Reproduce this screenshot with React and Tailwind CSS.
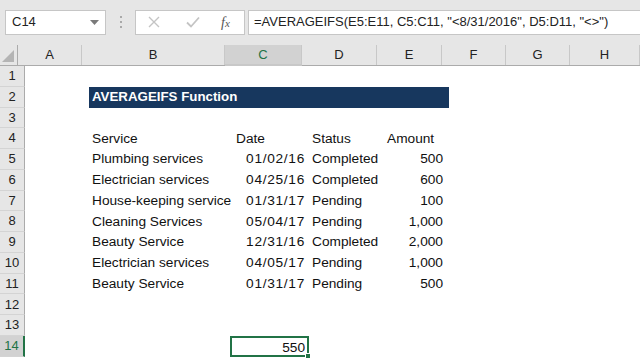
import React from "react";

const cols = [
  { key: "A", w: "w-[64px]" },
  { key: "B", w: "w-[143px]" },
  { key: "C", w: "w-[77px]" },
  { key: "D", w: "w-[75px]" },
  { key: "E", w: "w-[65px]" },
  { key: "F", w: "w-[64px]" },
  { key: "G", w: "w-[64px]" },
  { key: "H", w: "w-[70px]" },
];

const data = [
  ["Plumbing services", "01/02/16", "Completed", "500"],
  ["Electrician services", "04/25/16", "Completed", "600"],
  ["House-keeping service", "01/31/17", "Pending", "100"],
  ["Cleaning Services", "05/04/17", "Pending", "1,000"],
  ["Beauty Service", "12/31/16", "Completed", "2,000"],
  ["Electrician services", "04/05/17", "Pending", "1,000"],
  ["Beauty Service", "01/31/17", "Pending", "500"],
];

const cellFont = "font-['Liberation_Sans',Arial,sans-serif] text-[13.7px] text-[#111]";

const FormulaBar = () => (
  <div className="h-[45px] bg-[#e6e6e6] flex items-center pb-[1px]">
    <div className="ml-[5px] w-[101px] h-[25px] bg-white border border-[#c6c6c6] flex items-center justify-between px-[6px]">
      <span className="font-['Liberation_Sans',Arial,sans-serif] text-[13px] text-[#222]">C14</span>
      <svg width="9" height="5" viewBox="0 0 9 5">
        <path d="M0 0 L9 0 L4.5 5 Z" fill="#7a7a7a" />
      </svg>
    </div>
    <div className="ml-[14px] w-[3px] flex flex-col gap-[3px]">
      <div className="w-[2px] h-[2px] bg-[#a9a9a9]" />
      <div className="w-[2px] h-[2px] bg-[#a9a9a9]" />
      <div className="w-[2px] h-[2px] bg-[#a9a9a9]" />
    </div>
    <div className="ml-[12px] w-[110px] h-[25px] bg-white border border-[#c6c6c6] flex items-center">
      <svg className="ml-[12px]" width="12" height="12" viewBox="0 0 12 12">
        <path d="M1 1 L11 11 M11 1 L1 11" stroke="#c4c4c4" strokeWidth="1.4" />
      </svg>
      <svg className="ml-[26px]" width="14" height="12" viewBox="0 0 14 12">
        <path d="M1 6.5 L5 10.5 L13 1.5" stroke="#c4c4c4" strokeWidth="1.8" fill="none" />
      </svg>
      <span className="ml-[21px] font-['Liberation_Serif',serif] italic text-[14px] text-[#555]">
        f<span className="text-[11px]">x</span>
      </span>
    </div>
    <div className="ml-[3px] flex-1 h-[25px] bg-white border border-[#c6c6c6] border-r-0 flex items-center pl-[5px]">
      <span className="font-['Liberation_Sans',Arial,sans-serif] text-[13px] text-[#222] whitespace-nowrap">
        =AVERAGEIFS(E5:E11, C5:C11, "&lt;8/31/2016", D5:D11, "&lt;&gt;")
      </span>
    </div>
  </div>
);

const HeaderRow = () => (
  <div className="flex h-[21px] bg-[#e6e6e6] border-b border-[#ababab]">
    <div className="w-[25px] relative border-r border-[#ababab]">
      <svg className="absolute right-[3px] bottom-[3px]" width="12" height="12" viewBox="0 0 12 12">
        <path d="M12 0 L12 12 L0 12 Z" fill="#b4b4b4" />
      </svg>
    </div>
    {cols.map((c) => (
      <div
        key={c.key}
        className={`${c.w} shrink-0 flex items-center justify-center font-['Liberation_Sans',Arial,sans-serif] text-[13px] ${
          c.key === "C"
            ? "bg-[#d2d2d2] text-[#217346] border-b-2 border-[#217346] -mb-[1px]"
            : "text-[#222]"
        } border-r border-[#c8c8c8]`}
      >
        {c.key}
      </div>
    ))}
  </div>
);

const Row = ({ n, children }) => (
  <div className="flex h-[20.77px]">
    <div
      className={`w-[25px] shrink-0 flex items-center justify-center font-['Liberation_Sans',Arial,sans-serif] text-[13px] border-b border-[#d4d4d4] ${
        n === 14
          ? "bg-[#d2d2d2] text-[#217346] border-r-2 border-r-[#217346]"
          : "bg-[#e6e6e6] text-[#222] border-r border-r-[#ababab]"
      }`}
    >
      {n}
    </div>
    <div className="flex-1 flex bg-white">{children}</div>
  </div>
);

export default function App() {
  return (
    <div className="w-[640px] h-[358px] overflow-hidden bg-white">
      <FormulaBar />
      <HeaderRow />
      <Row n={1} />
      <Row n={2}>
        <div className="w-[64px] shrink-0" />
        <div className="w-[360px] shrink-0 bg-[#17375e] flex items-center pl-[3px] font-['Liberation_Sans',Arial,sans-serif] font-bold text-[13.3px] text-white">
          AVERAGEIFS Function
        </div>
      </Row>
      <Row n={3} />
      <Row n={4}>
        <div className="w-[64px] shrink-0" />
        <div className={`w-[143px] shrink-0 flex items-end pl-[3px] ${cellFont}`}>Service</div>
        <div className={`w-[77px] shrink-0 flex items-end pl-[4px] ${cellFont}`}>Date</div>
        <div className={`w-[75px] shrink-0 flex items-end pl-[3px] ${cellFont}`}>Status</div>
        <div className={`w-[65px] shrink-0 flex items-end pl-[3px] ${cellFont}`}>Amount</div>
      </Row>
      {data.map((r, i) => (
        <Row key={i} n={i + 5}>
          <div className="w-[64px] shrink-0" />
          <div className={`w-[143px] shrink-0 flex items-end pl-[3px] whitespace-nowrap ${cellFont}`}>{r[0]}</div>
          <div className={`w-[77px] shrink-0 flex items-end justify-end pr-[4px] tracking-[0.7px] ${cellFont}`}>{r[1]}</div>
          <div className={`w-[75px] shrink-0 flex items-end pl-[3px] ${cellFont}`}>{r[2]}</div>
          <div className={`w-[65px] shrink-0 flex items-end justify-end pr-[6px] ${cellFont}`}>{r[3]}</div>
        </Row>
      ))}
      <Row n={12} />
      <Row n={13} />
      <Row n={14}>
        <div className="w-[206px] shrink-0" />
        <div className={`w-[79px] -ml-[1px] shrink-0 relative border-2 border-[#217346] flex items-center justify-end pt-[3px] pr-[2px] ${cellFont}`}>
          550
          <div className="absolute -right-[4px] -bottom-[4px] w-[6px] h-[6px] bg-[#217346] border border-white" />
        </div>
      </Row>
    </div>
  );
}
